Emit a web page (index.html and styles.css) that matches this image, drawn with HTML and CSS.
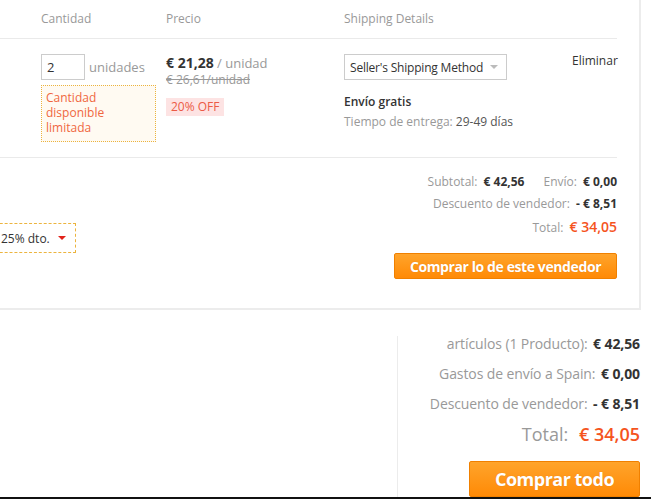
FILE: index.html
```html
<!DOCTYPE html>
<html lang="es">
<head>
<meta charset="utf-8">
<title>Carrito</title>
<link rel="stylesheet" href="styles.css">
</head>
<body>
<div class="page">
  <div class="card">
    <div class="head">
      <div>Cantidad</div>
      <div>Precio</div>
      <div>Shipping Details</div>
      <div></div>
    </div>
    <div class="item">
      <div class="qty-col">
        <div class="qty"><span class="qty-input">2</span><span class="unit">unidades</span></div>
        <div class="limit">Cantidad<br>disponible<br>limitada</div>
      </div>
      <div class="price-col">
        <div class="price"><b>€ 21,28</b> <span>/ unidad</span></div>
        <div class="old">€ 26,61/unidad</div>
        <span class="off">20% OFF</span>
      </div>
      <div class="ship-col">
        <div class="select"><span>Seller's Shipping Method</span><i class="caret"></i></div>
        <div class="free">Envío gratis</div>
        <div class="eta">Tiempo de entrega: <span>29-49 días</span></div>
      </div>
      <div class="del">Eliminar</div>
    </div>
    <div class="summary">
      <div class="coupon"><span>25% dto.</span><i class="red-caret"></i></div>
      <div class="totals">
        <div class="line">Subtotal: <b>€ 42,56</b><span class="gap"></span>Envío: <b>€ 0,00</b></div>
        <div class="line">Descuento de vendedor: <b>- € 8,51</b></div>
        <div class="line total">Total: <em>€ 34,05</em></div>
        <button class="btn small">Comprar lo de este vendedor</button>
      </div>
    </div>
  </div>
  <div class="grand">
    <div class="grand-col">
      <div class="gline">artículos (1 Producto): <b>€ 42,56</b></div>
      <div class="gline">Gastos de envío a Spain: <b>€ 0,00</b></div>
      <div class="gline">Descuento de vendedor: <b>- € 8,51</b></div>
      <div class="gline gtotal">Total: <em>€ 34,05</em></div>
      <button class="btn big">Comprar todo</button>
    </div>
  </div>
  <div class="edge"></div>
</div>
</body>
</html>
```

FILE: styles.css
```css
* { box-sizing: border-box; }
html, body {
  margin: 0;
  padding: 0;
  background: #fff;
  overflow: hidden;
}
body {
  font-family: "Open Sans", "DejaVu Sans", sans-serif;
  font-size: 12px;
  color: #333;
  width: 651px;
  height: 499px;
}
.page {
  width: 651px;
  height: 499px;
  display: flex;
  flex-direction: column;
}
.card {
  width: 641px;
  height: 310px;
  border-right: 2px solid #ececec;
  border-bottom: 2px solid #ececec;
  padding-right: 22px;
  flex: none;
}
.head {
  display: grid;
  grid-template-columns: 125px 178px 228px 45px;
  padding-left: 41px;
  height: 39px;
  line-height: 38px;
  color: #999;
  border-bottom: 1px solid #eaeaea;
}
.item {
  display: grid;
  grid-template-columns: 125px 178px 228px 45px;
  padding-left: 41px;
  padding-top: 15px;
  height: 119px;
  border-bottom: 1px solid #eaeaea;
}
.qty {
  display: flex;
  align-items: center;
  height: 26px;
}
.qty-input {
  width: 44px;
  height: 26px;
  border: 1px solid #ccc;
  line-height: 24px;
  padding-left: 5px;
  color: #333;
  font-size: 13px;
}
.unit {
  margin-left: 4px;
  color: #999;
  font-size: 13px;
}
.limit {
  margin-top: 5px;
  width: 115px;
  height: 57px;
  border: 1px dotted #ecb43e;
  background: #fffaf2;
  color: #f0673f;
  line-height: 15px;
  padding: 4px 4px 0;
}
.price {
  line-height: 17px;
  color: #999;
  font-size: 13px;
}
.price b {
  font-size: 14px;
  font-weight: 700;
  color: #333;
}
.old {
  line-height: 15px;
  color: #999;
  text-decoration: line-through;
}
.off {
  display: inline-block;
  margin-top: 11px;
  height: 18px;
  line-height: 18px;
  padding: 0 5px;
  background: #fde3e3;
  color: #ec5a45;
}
.select {
  width: 163px;
  height: 26px;
  border: 1px solid #ccc;
  display: flex;
  align-items: center;
  justify-content: space-between;
  padding: 0 8px 0 5px;
  color: #333;
  letter-spacing: -0.2px;
}
.caret {
  width: 0;
  height: 0;
  border-left: 4px solid transparent;
  border-right: 4px solid transparent;
  border-top: 4px solid #bbb;
}
.free {
  margin-top: 14px;
  line-height: 16px;
  font-weight: 600;
  color: #333;
}
.eta {
  margin-top: 4px;
  line-height: 16px;
  color: #999;
}
.eta span { color: #555; }
.del {
  line-height: 13px;
  text-align: right;
  color: #333;
}
.summary {
  display: flex;
  justify-content: space-between;
  align-items: flex-start;
  height: 150px;
}
.coupon {
  margin-top: 65px;
  margin-left: -10px;
  width: 86px;
  height: 30px;
  border: 1px dashed #ecb43e;
  display: flex;
  align-items: center;
  padding-left: 10px;
  color: #333;
}
.red-caret {
  margin-left: 8px;
  width: 0;
  height: 0;
  border-left: 4px solid transparent;
  border-right: 4px solid transparent;
  border-top: 4px solid #e2231a;
}
.totals {
  margin-top: 13px;
  display: flex;
  flex-direction: column;
  align-items: flex-end;
}
.line {
  line-height: 22px;
  color: #999;
}
.line b {
  color: #333;
  font-weight: 700;
  margin-left: 3px;
}
.gap {
  display: inline-block;
  width: 19px;
}
.total {
  line-height: 23px;
}
.total em {
  font-style: normal;
  font-size: 14px;
  font-weight: 600;
  color: #f5541d;
  margin-left: 3px;
}
.btn {
  font-family: "Open Sans", "DejaVu Sans", sans-serif;
  font-weight: 700;
  color: #fff;
  border: 1px solid #f08000;
  border-radius: 2px;
  background: linear-gradient(#ffa42b, #ff8a06);
  text-shadow: 0 0 1px rgba(180, 80, 0, 0.4);
  padding: 0;
  cursor: pointer;
}
.btn.small {
  margin-top: 14px;
  width: 223px;
  height: 26px;
  font-size: 14px;
  letter-spacing: -0.4px;
}
.grand {
  flex: 1;
  display: flex;
  justify-content: flex-end;
  padding-top: 26px;
  padding-right: 11px;
}
.grand-col {
  width: 243px;
  border-left: 1px solid #ececec;
  display: flex;
  flex-direction: column;
  align-items: flex-end;
}
.gline {
  font-size: 14px;
  line-height: 16px;
  color: #999;
  margin-bottom: 14px;
  letter-spacing: -0.1px;
}
.gline b {
  color: #333;
  font-weight: 700;
  margin-left: 2px;
}
.gtotal {
  font-size: 18px;
  line-height: 24px;
  margin-top: -4px;
  margin-bottom: 0;
  letter-spacing: 0;
}
.gtotal em {
  font-style: normal;
  font-weight: 600;
  color: #f5541d;
  margin-left: 6px;
}
.btn.big {
  margin-top: 15px;
  width: 171px;
  height: 36px;
  font-size: 18px;
  letter-spacing: -0.5px;
}
.edge {
  height: 2px;
  background: #111;
  flex: none;
}
```
